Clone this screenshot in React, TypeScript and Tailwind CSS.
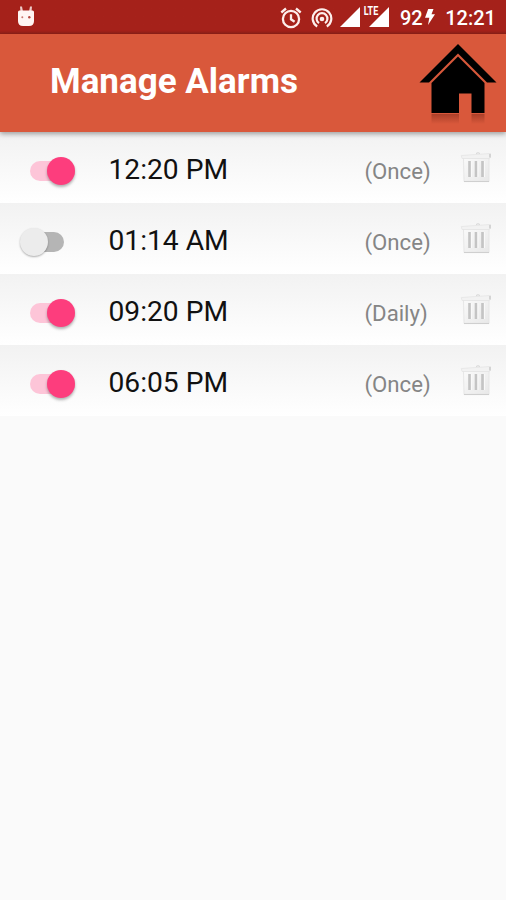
import { useState } from "react";
import clsx from "clsx";

type Alarm = { id: number; time: string; repeat: string; enabled: boolean };

const initialAlarms: Alarm[] = [
  { id: 1, time: "12:20 PM", repeat: "(Once)", enabled: true },
  { id: 2, time: "01:14 AM", repeat: "(Once)", enabled: false },
  { id: 3, time: "09:20 PM", repeat: "(Daily)", enabled: true },
  { id: 4, time: "06:05 PM", repeat: "(Once)", enabled: true },
];

function RobotIcon() {
  return (
    <svg viewBox="0 0 18 22" className="h-[22px] w-[18px]" fill="#fff5f3">
      <path d="M3 .5h2l.9 4.5H3.4zM13 .5h2L14.6 5h-2.5z" opacity=".8" />
      <path d="M2.5 4.5h13q1.5 0 1.5 1.5v9q0 5-5 5H6q-5 0-5-5V6q0-1.5 1.5-1.5z" />
      <circle cx="5.3" cy="11.3" r="1" fill="#c9776f" />
      <circle cx="12.3" cy="11.3" r="1.2" fill="#b5483f" />
    </svg>
  );
}

function AlarmIcon() {
  return (
    <svg
      viewBox="0 0 22 22"
      className="h-[22px] w-[22px]"
      fill="none"
      stroke="#fdeeec"
      strokeWidth="2.3"
    >
      <circle cx="11" cy="12" r="8.1" />
      <path d="M11 7.2v5.1l3.6 2.4M1.3 5.5l4.7-4M20.7 5.5l-4.7-4" />
    </svg>
  );
}

function HotspotIcon() {
  return (
    <svg
      viewBox="0 0 22 22"
      className="h-[22px] w-[22px]"
      fill="none"
      stroke="#fdeeec"
      strokeWidth="2.2"
    >
      <path d="M6.2 19.5a9.3 9.3 0 1 1 9.6 0" />
      <path d="M8 16.1a5.4 5.4 0 1 1 6 0" />
      <circle cx="11" cy="12" r="2.3" fill="#fdeeec" stroke="none" />
    </svg>
  );
}

function SignalIcon() {
  return (
    <svg viewBox="0 0 20 20" className="h-5 w-5" fill="#fff">
      <path d="M20 0v20H0z" />
    </svg>
  );
}

function BoltIcon() {
  return (
    <svg viewBox="0 0 10 16" className="h-4 w-[10px]" fill="#fff">
      <path d="M3.2 0h5.3L6.5 5.2H10L3 16l1.3-7.2H0z" />
    </svg>
  );
}

function HomeIcon() {
  return (
    <svg viewBox="0 0 78 80" className="h-20 w-[78px]">
      <defs>
        <linearGradient id="reflection" x1="0" y1="0" x2="0" y2="1">
          <stop offset="0" stopColor="#7c2717" stopOpacity=".5" />
          <stop offset="1" stopColor="#7c2717" stopOpacity="0" />
        </linearGradient>
      </defs>
      <path d="M39 0 77.5 38.5H68L39 9.5 10 38.5H.5z" />
      <path d="M39 12.5 65.5 39v30H52.5V49.5H40V69H12.5V39z" />
      <path d="M12.5 70H40v10H12.5zM52.5 70h13v10h-13z" fill="url(#reflection)" />
    </svg>
  );
}

function TrashIcon() {
  return (
    <svg viewBox="0 0 32 32" className="h-8 w-8">
      <defs>
        <linearGradient id="bin" x1="0" y1="0" x2="1" y2="1">
          <stop offset="0" stopColor="#fafafa" />
          <stop offset="1" stopColor="#e8e8e8" />
        </linearGradient>
      </defs>
      <path d="M16 2.5q2-1.5 4 0" fill="none" stroke="#d4d4d4" />
      <path d="M3.5 7H29v23.5H4z" fill="url(#bin)" stroke="#e2e2e2" strokeWidth=".8" />
      <path d="M4 30.5h25" stroke="#cfcfcf" strokeWidth="1.1" />
      <path d="M1.3 4.5 30.5 2.5v4l-1.5 1H2z" fill="#f2f2f2" stroke="#e2e2e2" strokeWidth=".7" />
      <path d="M29 3h2v3.5h-2z" fill="#d4d4d4" />
      <path d="M9.5 10v16M16 10v16M22.5 10v16" stroke="#c4c4c4" strokeWidth="2.6" />
      <path d="M11.5 10v16M18 10v16M24.5 10v16" stroke="#f9f9f9" />
    </svg>
  );
}

function StatusBar() {
  return (
    <div className="flex h-[34px] shrink-0 items-center bg-linear-to-b from-[#a5211a] from-90% to-[#8f2018] pl-[17px] text-[20px] leading-none font-medium text-white">
      <RobotIcon />
      <div className="ml-[245px] flex items-center">
        <div className="mt-px">
          <AlarmIcon />
        </div>
        <div className="mt-px ml-[9px]">
          <HotspotIcon />
        </div>
        <div className="ml-[7px]">
          <SignalIcon />
        </div>
        <div className="relative ml-[9px]">
          <SignalIcon />
          <span className="absolute -top-px -left-[6px] origin-left scale-x-75 bg-[#a5211a] px-px text-[12px] leading-[11px] font-bold">
            LTE
          </span>
        </div>
      </div>
      <span className="mt-px ml-[11px]">92</span>
      <div className="ml-[2px]">
        <BoltIcon />
      </div>
      <span className="mt-px ml-[10.5px]">12:21</span>
    </div>
  );
}

function Switch({ checked, onChange }: { checked: boolean; onChange: () => void }) {
  return (
    <button
      role="switch"
      aria-checked={checked}
      onClick={onChange}
      className={clsx(
        "flex h-[28px] w-[56px] items-center",
        checked ? "justify-end" : "justify-start",
      )}
    >
      <span
        className={clsx(
          "flex h-5 items-center rounded-full",
          checked ? "w-[45px] justify-end bg-[#fdc5d8]" : "ml-[11px] w-[34px] bg-[#b5b5b5]",
        )}
      >
        <span
          className={clsx(
            "size-7 shrink-0 rounded-full",
            checked
              ? "bg-[#fd3d7d] shadow-[0_2px_3px_rgba(0,0,0,0.3)]"
              : "-ml-[10px] bg-[#ececec] shadow-[0_1px_2px_rgba(0,0,0,0.3)]",
          )}
        />
      </span>
    </button>
  );
}

function AlarmRow({ alarm, onToggle }: { alarm: Alarm; onToggle: () => void }) {
  return (
    <li className="flex h-[71px] items-center bg-linear-to-b from-[#f2f2f2] to-white pr-[14px] pl-[19px]">
      <div className="mt-[6px]">
        <Switch checked={alarm.enabled} onChange={onToggle} />
      </div>
      <span className="mt-1 ml-[33.5px] w-[256px] text-[28.2px] leading-8 text-[#111]">
        {alarm.time}
      </span>
      <span className="mt-[6px] w-[95.5px] text-[22.2px] leading-7 text-[#858585]">
        {alarm.repeat}
      </span>
      <button aria-label="Delete alarm" className="-mt-[2px]">
        <TrashIcon />
      </button>
    </li>
  );
}

export default function App() {
  const [alarms, setAlarms] = useState(initialAlarms);

  const toggle = (id: number) =>
    setAlarms(alarms.map((a) => (a.id === id ? { ...a, enabled: !a.enabled } : a)));

  return (
    <div className="flex h-[900px] w-[506px] flex-col overflow-hidden bg-[#fafafa] font-['Roboto',sans-serif]">
      <StatusBar />
      <header className="z-10 flex h-[98.4px] shrink-0 items-start justify-between bg-[#d9583b] pr-[9px] pl-[50px] shadow-[0_2px_5px_rgba(0,0,0,0.35)]">
        <h1 className="mt-7 text-[35px] leading-10 font-bold text-white">Manage Alarms</h1>
        <div className="mt-[10px]">
          <HomeIcon />
        </div>
      </header>
      <ul>
        {alarms.map((alarm) => (
          <AlarmRow key={alarm.id} alarm={alarm} onToggle={() => toggle(alarm.id)} />
        ))}
      </ul>
    </div>
  );
}
